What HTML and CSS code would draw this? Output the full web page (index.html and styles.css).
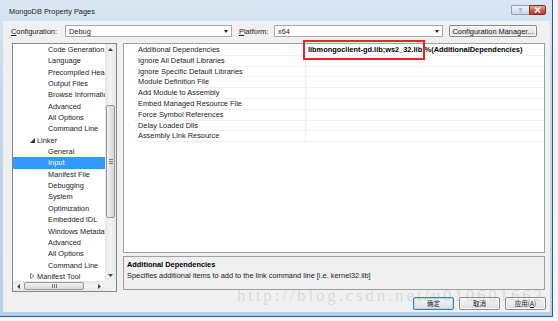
FILE: index.html
```html
<!DOCTYPE html>
<html lang="en">
  <head>
    <meta charset="UTF-8" />
    <title>MongoDB Property Pages</title>
    <link rel="stylesheet" href="styles.css">
  </head>
  <body>
    <div class="window">
      <div class="titlebar">
        <span class="title">MongoDB Property Pages</span>
        <div class="caption-btns">
          <span class="cap-help">?</span>
          <span class="cap-close">
            <svg width="7" height="6" viewBox="0 0 7 6"><path d="M1 0.5 L6 5.5 M6 0.5 L1 5.5" stroke="#fff" stroke-width="1.6"/></svg>
          </span>
        </div>
      </div>

      <div class="client">
        <div class="config-row">
          <label class="lbl lbl-config"><u>C</u>onfiguration:</label>
          <div class="combo combo-config"><span>Debug</span><i class="combo-arrow"></i></div>
          <label class="lbl lbl-platform"><u>P</u>latform:</label>
          <div class="combo combo-platform"><span>x64</span><i class="combo-arrow"></i></div>
          <button class="btn btn-manager">Configuration Manager...</button>
        </div>

        <div class="main">
          <div class="tree">
            <div class="tree-body">
              <ul class="tree-list">
                <li class="leaf">Code Generation</li>
                <li class="leaf">Language</li>
                <li class="leaf">Precompiled Headers</li>
                <li class="leaf">Output Files</li>
                <li class="leaf">Browse Information</li>
                <li class="leaf">Advanced</li>
                <li class="leaf">All Options</li>
                <li class="leaf">Command Line</li>
                <li class="node">
                  <svg class="twisty" width="5" height="5" viewBox="0 0 5 5"><path d="M5 0 L5 5 L0 5 Z" fill="#333"/></svg>Linker
                </li>
                <li class="leaf">General</li>
                <li class="leaf selected">Input</li>
                <li class="leaf">Manifest File</li>
                <li class="leaf">Debugging</li>
                <li class="leaf">System</li>
                <li class="leaf">Optimization</li>
                <li class="leaf">Embedded IDL</li>
                <li class="leaf">Windows Metadata</li>
                <li class="leaf">Advanced</li>
                <li class="leaf">All Options</li>
                <li class="leaf">Command Line</li>
                <li class="node">
                  <svg class="twisty" width="5" height="6" viewBox="0 0 5 6"><path d="M0.5 0.5 L4 3 L0.5 5.5 Z" fill="none" stroke="#777" stroke-width="0.9"/></svg>Manifest Tool
                </li>
              </ul>
              <div class="vscroll">
                <div class="sb-arrow">
                  <svg width="5" height="3" viewBox="0 0 5 3"><path d="M0 3 L2.5 0 L5 3 Z" fill="#444"/></svg>
                </div>
                <div class="vscroll-gap"></div>
                <div class="vthumb"><span class="grip-v"></span></div>
                <div class="fill"></div>
                <div class="sb-arrow">
                  <svg width="5" height="3" viewBox="0 0 5 3"><path d="M0 0 L5 0 L2.5 3 Z" fill="#444"/></svg>
                </div>
              </div>
            </div>
            <div class="hscroll-row">
              <div class="hscroll">
                <div class="sb-arrow">
                  <svg width="3" height="5" viewBox="0 0 3 5"><path d="M3 0 L3 5 L0 2.5 Z" fill="#444"/></svg>
                </div>
                <div class="hthumb"><span class="grip-h"></span></div>
                <div class="fill"></div>
                <div class="sb-arrow">
                  <svg width="3" height="5" viewBox="0 0 3 5"><path d="M0 0 L3 2.5 L0 5 Z" fill="#444"/></svg>
                </div>
              </div>
              <div class="corner"></div>
            </div>
          </div>

          <div class="right">
            <div class="grid">
              <div class="row">
                <span class="name">Additional Dependencies</span>
                <span class="value">libmongoclient-gd.lib;ws2_32.lib;%(AdditionalDependencies)</span>
              </div>
              <div class="row"><span class="name">Ignore All Default Libraries</span><span class="value"></span></div>
              <div class="row"><span class="name">Ignore Specific Default Libraries</span><span class="value"></span></div>
              <div class="row"><span class="name">Module Definition File</span><span class="value"></span></div>
              <div class="row"><span class="name">Add Module to Assembly</span><span class="value"></span></div>
              <div class="row"><span class="name">Embed Managed Resource File</span><span class="value"></span></div>
              <div class="row"><span class="name">Force Symbol References</span><span class="value"></span></div>
              <div class="row"><span class="name">Delay Loaded Dlls</span><span class="value"></span></div>
              <div class="row"><span class="name">Assembly Link Resource</span><span class="value"></span></div>
              <div class="mark-box"></div>
            </div>
            <div class="desc">
              <div class="desc-title">Additional Dependencies</div>
              <div class="desc-text">Specifies additional items to add to the link command line [i.e. kernel32.lib]</div>
            </div>
          </div>
        </div>

        <div class="buttons">
          <button class="btn btn-dlg btn-ok">确定</button>
          <button class="btn btn-dlg">取消</button>
          <button class="btn btn-dlg">应用(<u>A</u>)</button>
        </div>
      </div>

      <div class="watermark">http://blog.csdn.net/u010601662</div>
    </div>
  </body>
</html>
```

FILE: styles.css
```css
body {
  margin: 0;
  background: #f2f5f9;
  font-family: "Liberation Sans", Arial, sans-serif;
  font-size: 7.4px;
  color: #1a1a1a;
}

.window {
  position: relative;
  width: 547px;
  height: 312px;
  padding: 0 2px 4px 3px;
  border-right: 1px solid #2f5c8a;
  border-bottom: 1px solid #2f5c8a;
  background: linear-gradient(#dae6f5, #c3d6ed 30%, #b9cfe9);
}

/* title bar */
.titlebar {
  height: 21px;
  display: flex;
  align-items: center;
  padding-left: 6px;
}
.title {
  color: #1a1a1a;
  margin-top: 2px;
}
.caption-btns {
  margin-left: auto;
  margin-right: 4px;
  margin-top: -1px;
  display: flex;
}
.cap-help,
.cap-close {
  height: 10px;
  display: flex;
  align-items: center;
  justify-content: center;
  box-sizing: border-box;
}
.cap-help {
  width: 18px;
  border: 1px solid #8aa0bd;
  border-right: none;
  border-radius: 2px 0 0 2px;
  background: linear-gradient(#eef3fa, #c9d8ec);
  color: #8b9bb3;
  font-size: 7px;
  font-weight: bold;
}
.cap-close {
  width: 17px;
  border: 1px solid #7a3128;
  border-radius: 0 2px 2px 0;
  background: linear-gradient(#e9a99a, #d0604c 50%, #c0392b);
}

/* client area */
.client {
  width: 547px;
  height: 291px;
  background: #f0f0f0;
  display: flex;
  flex-direction: column;
}

.config-row {
  margin-top: 2px;
  height: 16px;
  display: flex;
  align-items: center;
}
.lbl-config {
  margin-left: 8px;
  width: 54px;
}
.lbl-platform {
  margin-left: 7px;
  width: 35px;
}
.combo {
  height: 12px;
  box-sizing: border-box;
  border: 1px solid #a6a9ae;
  background: #fff;
  display: flex;
  align-items: center;
  padding-left: 3px;
}
.combo span {
  flex: 1;
}
.combo-arrow {
  width: 0;
  height: 0;
  border-left: 2.5px solid transparent;
  border-right: 2.5px solid transparent;
  border-top: 3px solid #222;
  margin-right: 3px;
}
.combo-config {
  width: 167px;
}
.combo-platform {
  width: 169px;
}

.btn {
  font-family: "Liberation Sans", Arial, sans-serif;
  font-size: 7.4px;
  color: #1a1a1a;
  box-sizing: border-box;
  border: 1px solid #8a8a8a;
  border-radius: 2px;
  background: linear-gradient(#f4f4f4, #ebebeb 50%, #dcdcdc);
  box-shadow: inset 0 0 0 1px #fafafa;
  padding: 0;
}
.btn-manager {
  margin-left: 6px;
  width: 88px;
  height: 12px;
}

/* main area */
.main {
  margin-top: 4px;
  margin-left: 9px;
  display: flex;
  gap: 6px;
}

.tree {
  width: 105px;
  height: 249px;
  box-sizing: border-box;
  border: 1px solid #828790;
  background: #fff;
  display: flex;
  flex-direction: column;
}
.tree-body {
  flex: 1;
  display: flex;
  min-height: 0;
}
.tree-list {
  flex: 1;
  margin: 0;
  padding: 0;
  list-style: none;
  overflow: hidden;
  white-space: nowrap;
  line-height: 11.35px;
}
.tree-list .leaf {
  padding-left: 35px;
}
.tree-list .node {
  padding-left: 17px;
}
.tree-list .twisty {
  margin-right: 2px;
  vertical-align: 0;
}
.tree-list .selected {
  background: #3399ff;
  color: #fff;
}

.vscroll {
  width: 11px;
  display: flex;
  flex-direction: column;
  background: linear-gradient(90deg, #e6e6e6, #f3f3f3 50%, #e6e6e6);
}
.sb-arrow {
  width: 11px;
  height: 11px;
  display: flex;
  align-items: center;
  justify-content: center;
  flex: none;
}
.vscroll-gap {
  height: 50px;
}
.vthumb {
  height: 113px;
  margin: 0 1px;
  box-sizing: border-box;
  border: 1px solid #979797;
  border-radius: 2px;
  background: linear-gradient(90deg, #f3f3f3, #e4e4e4 50%, #d6d6d6);
  display: flex;
  align-items: center;
  justify-content: center;
}
.grip-v {
  width: 4px;
  height: 5px;
  background: repeating-linear-gradient(#777 0 1px, transparent 1px 2px);
}
.fill {
  flex: 1;
}

.hscroll-row {
  height: 10px;
  display: flex;
}
.hscroll {
  flex: 1;
  display: flex;
  background: linear-gradient(#e6e6e6, #f3f3f3 50%, #e6e6e6);
}
.hscroll .sb-arrow {
  height: 10px;
}
.hthumb {
  width: 60px;
  margin: 1px 0;
  box-sizing: border-box;
  border: 1px solid #979797;
  border-radius: 2px;
  background: linear-gradient(#f3f3f3, #e4e4e4 50%, #d6d6d6);
  display: flex;
  align-items: center;
  justify-content: center;
}
.grip-h {
  width: 5px;
  height: 4px;
  background: repeating-linear-gradient(90deg, #777 0 1px, transparent 1px 2px);
}
.corner {
  width: 11px;
  background: #f0f0f0;
}

/* property grid */
.right {
  width: 422px;
  display: flex;
  flex-direction: column;
  gap: 3px;
}
.grid {
  position: relative;
  height: 210px;
  box-sizing: border-box;
  border: 1px solid #a0a0a0;
  background: #fff;
  padding-top: 1px;
  padding-left: 10px;
}
.row {
  display: flex;
  height: 10.8px;
  box-sizing: border-box;
  border-bottom: 1px solid #f0f0f0;
  line-height: 10px;
  white-space: nowrap;
}
.row .name {
  width: 171px;
  padding-left: 4px;
  box-sizing: border-box;
}
.row .value {
  flex: 1;
  border-left: 1px solid #f0f0f0;
  padding-left: 2px;
  font-weight: bold;
  color: #000;
}
.mark-box {
  position: absolute;
  left: 179px;
  top: -4px;
  width: 122px;
  height: 20px;
  box-sizing: border-box;
  border: 2px solid #e4262a;
}

.desc {
  height: 34px;
  box-sizing: border-box;
  border: 1px solid #a0a0a0;
  background: #f0f0f0;
  padding: 2px 3px;
  line-height: 11px;
}
.desc-title {
  font-weight: bold;
  color: #000;
}

/* dialog buttons */
.buttons {
  margin-top: 5px;
  padding-right: 4px;
  display: flex;
  justify-content: flex-end;
  gap: 5px;
}
.btn-dlg {
  width: 41px;
  height: 13px;
  font-family: "Noto Sans CJK SC", "Liberation Sans", sans-serif;
  font-size: 6.5px;
  line-height: 11px;
}
.btn-ok {
  border-color: #3c7fb1;
  box-shadow: inset 0 0 0 1px #a8dcf5;
}

.watermark {
  position: absolute;
  left: 237px;
  top: 286px;
  font-family: "Liberation Serif", serif;
  font-size: 17px;
  letter-spacing: 2.8px;
  color: rgba(150, 150, 150, 0.28);
  pointer-events: none;
  white-space: nowrap;
}
```
